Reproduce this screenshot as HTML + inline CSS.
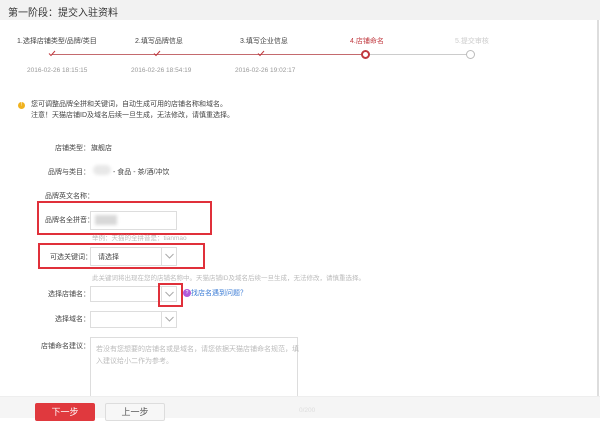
<!DOCTYPE html>
<html><head><meta charset="utf-8"><style>
*{margin:0;padding:0;box-sizing:border-box}
body{width:600px;height:418px;overflow:hidden;background:#fff;font-family:"Liberation Sans","Noto Sans CJK SC",sans-serif;color:#444;position:relative;font-size:7px}
.a{position:absolute;white-space:nowrap}
.g{color:#999}.lg{color:#bbb}
.box{position:absolute;border:1px solid #ddd;background:#fff}
.red{position:absolute;border:2px solid #e0303a}
.lbl{position:absolute;text-align:right;width:90px;left:0;white-space:nowrap}
svg{position:absolute}
</style></head><body>
<div class="a" style="left:0;top:0;width:600px;height:20px;background:#f2f2f2"></div>
<div class="a" style="left:8px;top:4px;font-size:10px;color:#333">第一阶段：提交入驻资料</div>
<div class="a" style="left:597px;top:20px;width:2px;height:376px;background:#ddd"></div>

<div class="a" style="left:17px;top:36px">1.选择店铺类型/品牌/类目</div>
<div class="a" style="left:135px;top:36px">2.填写品牌信息</div>
<div class="a" style="left:240px;top:36px">3.填写企业信息</div>
<div class="a" style="left:350px;top:36px;color:#c0393f">4.店铺命名</div>
<div class="a" style="left:455px;top:36px;color:#ccc">5.提交审核</div>
<div class="a" style="left:52px;top:54px;width:313px;height:1px;background:#c46a6e"></div>
<div class="a" style="left:365px;top:54px;width:105px;height:1px;background:#ccc"></div>
<svg style="left:48px;top:50px" width="8" height="7"><path d="M1 3.5L3 5.5L7 1" stroke="#c0393f" fill="none" stroke-width="1"/></svg>
<svg style="left:153px;top:50px" width="8" height="7"><path d="M1 3.5L3 5.5L7 1" stroke="#c0393f" fill="none" stroke-width="1"/></svg>
<svg style="left:257px;top:50px" width="8" height="7"><path d="M1 3.5L3 5.5L7 1" stroke="#c0393f" fill="none" stroke-width="1"/></svg>
<div class="a" style="left:361px;top:50px;width:9px;height:9px;border-radius:50%;border:2px solid #c0393f;background:#fff"></div>
<div class="a" style="left:466px;top:50px;width:9px;height:9px;border-radius:50%;border:1.5px solid #bbb;background:#fff"></div>
<div class="a g" style="left:27px;top:67px;font-size:6.5px">2016-02-26 18:15:15</div>
<div class="a g" style="left:131px;top:67px;font-size:6.5px">2016-02-26 18:54:19</div>
<div class="a g" style="left:235px;top:67px;font-size:6.5px">2016-02-26 19:02:17</div>

<div class="a" style="left:18px;top:102px;width:7px;height:7px;border-radius:50%;background:#f0b21e;color:#fff;font-size:5px;text-align:center;line-height:7px">!</div>
<div class="a" style="left:31px;top:99px;line-height:11px">您可调整品牌全拼和关键词，自动生成可用的店铺名称和域名。<br>注意！天猫店铺ID及域名后续一旦生成，无法修改，请慎重选择。</div>

<div class="lbl" style="top:143px">店铺类型：</div><div class="a" style="left:91px;top:143px">旗舰店</div>
<div class="lbl" style="top:167px">品牌与类目：</div>
<div class="a" style="left:93px;top:165px;width:18px;height:10px;background:#e8e8e8;border-radius:5px;filter:blur(1.5px)"></div>
<div class="a" style="left:113px;top:167px">- 食品 - 茶/酒/冲饮</div>
<div class="a" style="left:45px;top:191px">品牌英文名称：</div>

<div class="red" style="left:37px;top:201px;width:175px;height:34px"></div>
<div class="a" style="left:45px;top:215px">品牌名全拼音：</div>
<div class="box" style="left:90px;top:211px;width:87px;height:19px"></div>
<div class="a" style="left:95px;top:215px;width:22px;height:10px;background:#d8d8d8;filter:blur(1.5px)"></div>
<div class="a lg" style="left:92px;top:232px;font-size:6.5px">举例：天猫的全拼音是：tianmao</div>

<div class="red" style="left:38px;top:243px;width:167px;height:26px"></div>
<div class="a" style="left:50px;top:252px">可选关键词：</div>
<div class="box" style="left:90px;top:247px;width:87px;height:19px"></div>
<div class="a" style="left:98px;top:252px">请选择</div>
<div class="a" style="left:161px;top:248px;width:1px;height:17px;background:#ddd"></div>
<svg style="left:165px;top:253px" width="9" height="6"><path d="M0.5 1L4.5 5L8.5 1" stroke="#aaa" fill="none"/></svg>
<div class="a lg" style="left:92px;top:272px;font-size:6.5px">此关键词将出现在您的店铺名称中。天猫店铺ID及域名后续一旦生成，无法修改，请慎重选择。</div>

<div class="lbl" style="top:289px">选择店铺名：</div>
<div class="box" style="left:90px;top:286px;width:87px;height:16px"></div>
<div class="a" style="left:161px;top:287px;width:1px;height:14px;background:#ddd"></div>
<svg style="left:165px;top:291px" width="9" height="6"><path d="M0.5 1L4.5 5L8.5 1" stroke="#aaa" fill="none"/></svg>
<div class="red" style="left:158px;top:283px;width:25px;height:24px"></div>
<div class="a" style="left:183px;top:289px;width:8px;height:8px;border-radius:50%;background:#b05ad8;color:#fff;font-size:5px;text-align:center;line-height:8px">?</div>
<div class="a" style="left:191px;top:288px;color:#3a7bd5">找店名遇到问题？</div>

<div class="lbl" style="top:314px">选择域名：</div>
<div class="box" style="left:90px;top:311px;width:87px;height:17px"></div>
<div class="a" style="left:161px;top:312px;width:1px;height:15px;background:#ddd"></div>
<svg style="left:165px;top:316px" width="9" height="6"><path d="M0.5 1L4.5 5L8.5 1" stroke="#aaa" fill="none"/></svg>

<div class="lbl" style="top:341px">店铺命名建议：</div>
<div class="box" style="left:90px;top:337px;width:208px;height:70px"></div>
<div class="a lg" style="left:96px;top:344px;line-height:12px">若没有您想要的店铺名或是域名，请您依据天猫店铺命名规范，填<br>入建议给小二作为参考。</div>

<div class="a" style="left:0;top:396px;width:600px;height:22px;background:#f5f5f5;border-top:1px solid #eee"></div>
<div class="a" style="left:35px;top:403px;width:60px;height:18px;background:#e0393e;color:#fff;font-size:9px;text-align:center;line-height:18px;border-radius:2px">下一步</div>
<div class="a" style="left:105px;top:403px;width:60px;height:18px;background:#f7f7f7;border:1px solid #ddd;color:#555;font-size:9px;text-align:center;line-height:16px;border-radius:2px">上一步</div>
<div class="a" style="left:299px;top:407px;color:#ddd;font-size:6.5px">0/200</div>
</body></html>
